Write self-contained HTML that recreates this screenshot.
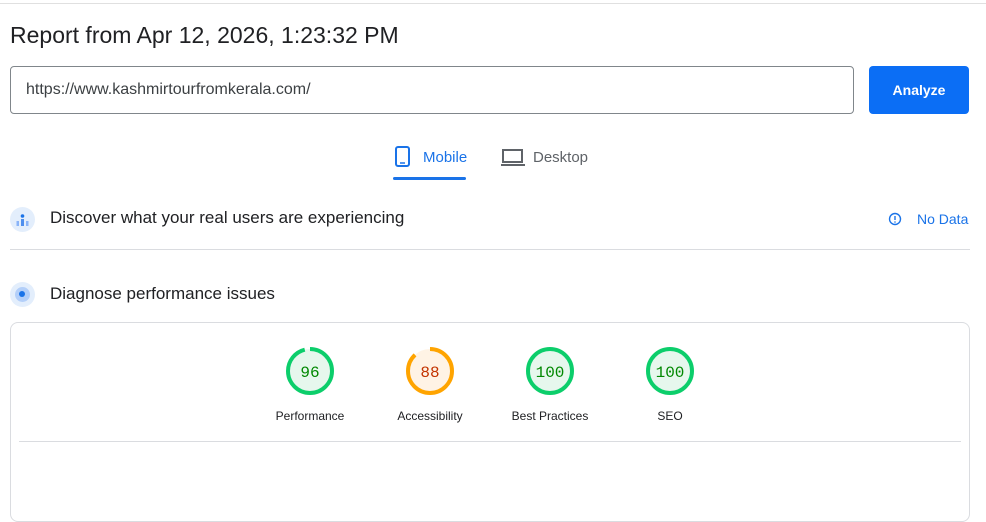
<!DOCTYPE html>
<html><head><meta charset="utf-8"><style>
*{margin:0;padding:0;box-sizing:border-box}
body{width:986px;height:508px;background:#fff;font-family:"Liberation Sans",Arial,sans-serif;position:relative;overflow:hidden;color:#202124}
.abs{position:absolute}
</style></head><body>
<div class="abs" style="left:0;top:3px;width:986px;height:1px;background:#e0e0e0"></div>
<div class="abs" style="left:10px;top:22px;font-size:23px;color:#202124">Report from Apr 12, 2026, 1:23:32 PM</div>
<div class="abs" style="left:10px;top:66px;width:844px;height:48px;border:1px solid #80868b;border-radius:4px"></div>
<div class="abs" style="left:26px;top:81px;font-size:16px;color:#3c4043">https://www.kashmirtourfromkerala.com/</div>
<div class="abs" style="left:869px;top:66px;width:100px;height:48px;background:#0b6ef5;border-radius:4px;color:#fff;font-weight:bold;font-size:14px;text-align:center;line-height:48px">Analyze</div>
<svg class="abs" style="left:394px;top:146px" width="18" height="22"><rect x="2" y="1" width="13" height="19" rx="2" fill="none" stroke="#1a73e8" stroke-width="2"/><line x1="6" y1="17" x2="11" y2="17" stroke="#1a73e8" stroke-width="1.5"/></svg>
<div class="abs" style="left:423px;top:149px;font-size:15px;color:#1a73e8">Mobile</div>
<div class="abs" style="left:393px;top:177px;width:73px;height:3px;background:#1a73e8;border-radius:2px"></div>
<svg class="abs" style="left:500px;top:148px" width="26" height="20"><rect x="3" y="2" width="19" height="12" fill="none" stroke="#5f6368" stroke-width="2"/><line x1="1" y1="17" x2="25" y2="17" stroke="#5f6368" stroke-width="2"/></svg>
<div class="abs" style="left:533px;top:149px;font-size:15px;color:#5f6368">Desktop</div>
<div class="abs" style="left:10px;top:207px;width:25px;height:25px;border-radius:50%;background:#e3eefc"></div>
<svg class="abs" style="left:14px;top:211px" width="17" height="17"><circle cx="8.5" cy="5" r="1.8" fill="#1a73e8"/><rect x="7" y="8" width="3" height="7" fill="#4e8fee"/><rect x="2.5" y="10" width="2.5" height="5" fill="#8ab4f8"/><rect x="12" y="10" width="2.5" height="5" fill="#8ab4f8"/></svg>
<div class="abs" style="left:50px;top:208px;font-size:17px;color:#202124">Discover what your real users are experiencing</div>
<svg class="abs" style="left:888px;top:212px" width="14" height="14"><circle cx="7" cy="7" r="5.5" fill="none" stroke="#1a73e8" stroke-width="1.4"/><line x1="7" y1="4" x2="7" y2="8" stroke="#1a73e8" stroke-width="1.4"/><circle cx="7" cy="10" r=".8" fill="#1a73e8"/></svg>
<div class="abs" style="left:917px;top:211px;font-size:14px;color:#1a73e8">No Data</div>
<div class="abs" style="left:10px;top:249px;width:960px;height:1px;background:#dadce0"></div>
<div class="abs" style="left:10px;top:282px;width:25px;height:25px;border-radius:50%;background:#e3eefc"></div>
<div class="abs" style="left:15px;top:287px;width:15px;height:15px;border-radius:50%;background:#b3cff9"></div>
<div class="abs" style="left:19px;top:291px;width:6px;height:6px;border-radius:50%;background:#1a73e8"></div>
<div class="abs" style="left:50px;top:284px;font-size:17px;color:#202124">Diagnose performance issues</div>
<div class="abs" style="left:10px;top:322px;width:960px;height:200px;border:1px solid #dadce0;border-radius:8px"></div>
<div class="abs" style="left:19px;top:441px;width:942px;height:1px;background:#dadce0"></div>
<svg class="abs" style="left:0;top:340px" width="986" height="100" font-family="Liberation Mono,monospace" font-size="16">
<g transform="translate(310,31)"><circle r="22" fill="#e6f7ed"/><circle r="22" fill="none" stroke="#0cce6b" stroke-width="4" stroke-dasharray="132.7 138.2" transform="rotate(-90)"/><text y="6" text-anchor="middle" fill="#008800">96</text></g>
<g transform="translate(430,31)"><circle r="22" fill="#fff3e5"/><circle r="22" fill="none" stroke="#ffa400" stroke-width="4" stroke-dasharray="121.6 138.2" transform="rotate(-90)"/><text y="6" text-anchor="middle" fill="#c33300">88</text></g>
<g transform="translate(550,31)"><circle r="22" fill="#e6f7ed" stroke="#0cce6b" stroke-width="4"/><text y="6" text-anchor="middle" fill="#008800">100</text></g>
<g transform="translate(670,31)"><circle r="22" fill="#e6f7ed" stroke="#0cce6b" stroke-width="4"/><text y="6" text-anchor="middle" fill="#008800">100</text></g>
<g font-family="Liberation Sans,sans-serif" font-size="12" fill="#202124" text-anchor="middle"><text x="310" y="80">Performance</text><text x="430" y="80">Accessibility</text><text x="550" y="80">Best Practices</text><text x="670" y="80">SEO</text></g>
</svg>
</body></html>
